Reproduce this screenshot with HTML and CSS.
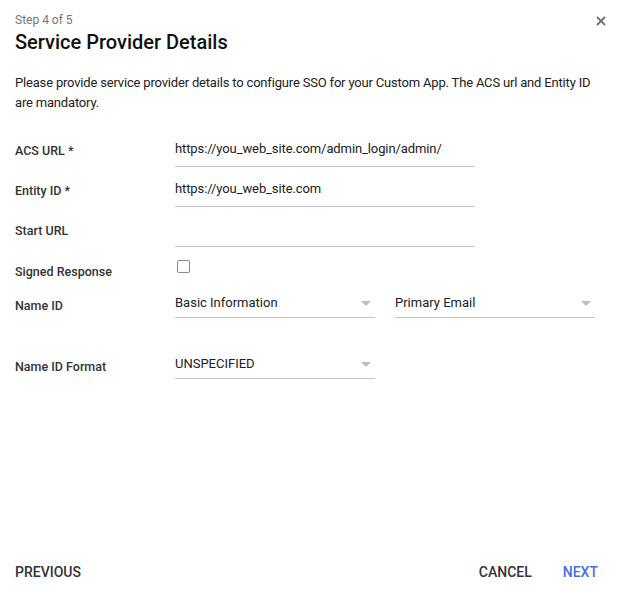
FILE: index.html
```html
<!DOCTYPE html>
<html lang="en">
<head>
  <meta charset="UTF-8" />
  <meta name="viewport" content="width=device-width, initial-scale=1" />
  <title>Service Provider Details</title>
  <link rel="stylesheet" href="styles.css">
</head>
<body>
  <div class="dialog">
    <header class="dialog-header">
      <div>
        <div class="step">Step 4 of 5</div>
        <h1 class="title">Service Provider Details</h1>
      </div>
      <button class="close-btn" aria-label="Close">
        <svg width="10" height="10" viewBox="0 0 10 10"><path d="M1 1L9 9M9 1L1 9" stroke="#707070" stroke-width="1.8" fill="none"/></svg>
      </button>
    </header>

    <p class="intro">Please provide service provider details to configure SSO for your Custom App. The ACS url and Entity ID are mandatory.</p>

    <div class="form">
      <div class="row">
        <label class="label">ACS URL *</label>
        <input class="field" type="text" value="https://you_web_site.com/admin_login/admin/">
      </div>
      <div class="row">
        <label class="label">Entity ID *</label>
        <input class="field" type="text" value="https://you_web_site.com">
      </div>
      <div class="row">
        <label class="label">Start URL</label>
        <input class="field" type="text" value="">
      </div>
      <div class="row row-check">
        <label class="label">Signed Response</label>
        <span class="checkbox"></span>
      </div>
      <div class="row row-select">
        <label class="label">Name ID</label>
        <div class="select">Basic Information<span class="arrow"></span></div>
        <div class="select">Primary Email<span class="arrow"></span></div>
      </div>
      <div class="row row-select row-format">
        <label class="label">Name ID Format</label>
        <div class="select">UNSPECIFIED<span class="arrow"></span></div>
      </div>
    </div>

    <footer class="actions">
      <button class="btn">Previous</button>
      <div class="actions-right">
        <button class="btn">Cancel</button>
        <button class="btn btn-primary">Next</button>
      </div>
    </footer>
  </div>
</body>
</html>
```

FILE: styles.css
```css
body {
  margin: 0;
  padding: 0;
  background: #fff;
  font-family: Roboto, 'Noto Sans', sans-serif;
  color: #212121;
}
.dialog {
  height: 592px;
  box-sizing: border-box;
  padding: 11px 21px 2px 15px;
  display: flex;
  flex-direction: column;
}
.dialog-header {
  display: flex;
  justify-content: space-between;
  align-items: flex-start;
}
.step {
  font-size: 12px;
  line-height: 18px;
  color: #757575;
}
.title {
  margin: 0;
  font-size: 20px;
  line-height: 26px;
  font-weight: 500;
  color: #111;
}
.close-btn {
  background: none;
  border: none;
  padding: 0;
  margin: 5px -8px 0 0;
  width: 10px;
  height: 10px;
  cursor: pointer;
}
.close-btn svg {
  display: block;
}
.intro {
  margin: 18px 0 0;
  font-size: 13px;
  line-height: 20px;
  letter-spacing: -0.18px;
  color: #212121;
}
.form {
  margin-top: 20px;
}
.row {
  display: flex;
  align-items: center;
  height: 34px;
  margin-bottom: 6px;
}
.label {
  width: 160px;
  flex-shrink: 0;
  font-size: 12.5px;
  font-weight: 500;
  color: #333;
}
.field {
  width: 300px;
  height: 34px;
  box-sizing: border-box;
  border: none;
  border-bottom: 1px solid #c4c4c4;
  padding: 6px 0 8px;
  font-family: inherit;
  font-size: 13px;
  line-height: 20px;
  letter-spacing: -0.1px;
  color: #212121;
  outline: none;
}
.row-check {
  height: 24px;
  margin-top: 10px;
  margin-bottom: 0;
}
.row-check .label {
  padding-top: 4px;
}
.checkbox {
  align-self: flex-start;
  margin: 3px 0 0 2px;
  width: 11px;
  height: 11px;
  border: 1.5px solid #8a8a8a;
  border-radius: 2px;
}
.row-select {
  align-items: stretch;
  margin-top: 3px;
  gap: 20px;
}
.row-select .label {
  align-self: flex-end;
  line-height: 20px;
  padding-bottom: 2px;
  margin-right: -20px;
}
.row-format {
  margin-top: 27px;
}
.select {
  position: relative;
  width: 200px;
  box-sizing: border-box;
  border-bottom: 1px solid #c4c4c4;
  padding: 9px 0 5px;
  font-size: 13px;
  line-height: 20px;
  color: #212121;
}
.arrow {
  position: absolute;
  right: 4px;
  top: 17px;
  width: 0;
  height: 0;
  border-left: 5px solid transparent;
  border-right: 5px solid transparent;
  border-top: 5px solid #bdbdbd;
}
.actions {
  margin-top: auto;
  height: 36px;
  display: flex;
  justify-content: space-between;
  align-items: center;
}
.actions-right {
  display: flex;
  gap: 31px;
}
.btn {
  background: none;
  border: none;
  padding: 0;
  font-family: inherit;
  font-size: 14px;
  font-weight: 500;
  text-transform: uppercase;
  color: #333;
  cursor: pointer;
}
.btn-primary {
  color: #4a6fdc;
}
```
